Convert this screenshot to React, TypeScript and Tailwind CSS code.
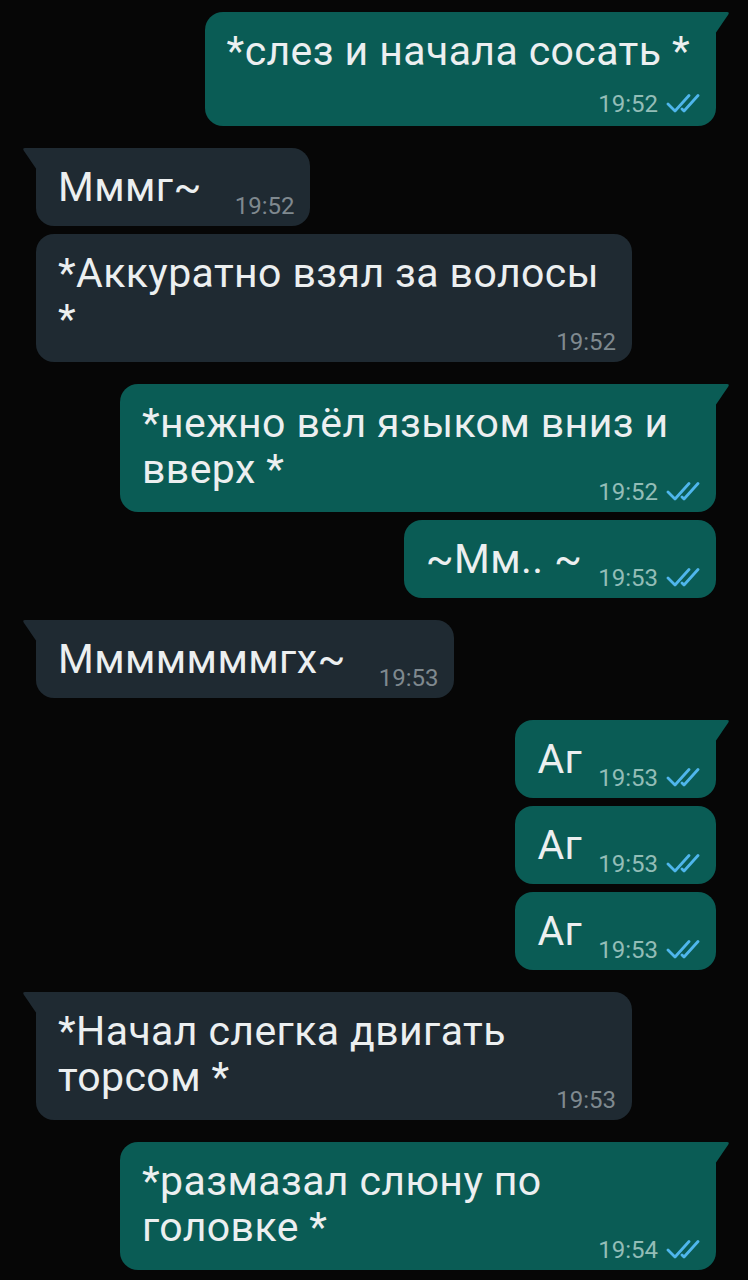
import React from 'react';
import clsx from 'clsx';

type Msg = {
    out: boolean;
    lines: string[];
    time: string;
    tail: boolean;
    mode: 'inline' | 'below' | 'wrap';
};

const messages: Msg[] = [
    { out: true, lines: ['*слез и начала сосать *'], time: '19:52', tail: true, mode: 'below' },
    { out: false, lines: ['Мммг~'], time: '19:52', tail: true, mode: 'inline' },
    { out: false, lines: ['*Аккуратно взял за волосы', '*'], time: '19:52', tail: false, mode: 'wrap' },
    { out: true, lines: ['*нежно вёл языком вниз и', 'вверх *'], time: '19:52', tail: true, mode: 'wrap' },
    { out: true, lines: ['~Мм.. ~'], time: '19:53', tail: false, mode: 'inline' },
    { out: false, lines: ['Мммммммгх~'], time: '19:53', tail: true, mode: 'inline' },
    { out: true, lines: ['Аг'], time: '19:53', tail: true, mode: 'inline' },
    { out: true, lines: ['Аг'], time: '19:53', tail: false, mode: 'inline' },
    { out: true, lines: ['Аг'], time: '19:53', tail: false, mode: 'inline' },
    { out: false, lines: ['*Начал слегка двигать', 'торсом *'], time: '19:53', tail: true, mode: 'wrap' },
    { out: true, lines: ['*размазал слюну по', 'головке *'], time: '19:54', tail: true, mode: 'wrap' },
];

const Checks = () => (
    <svg width="36" height="20" viewBox="0 0 36 20" fill="none" className="ml-[8px]">
        <path d="M2 10 L9 17 L23 1.5" stroke="#4fb6ec" strokeWidth="2.8" strokeLinecap="round" strokeLinejoin="round" />
        <path d="M16 15 L18 17 L32 1.5" stroke="#4fb6ec" strokeWidth="2.8" strokeLinecap="round" strokeLinejoin="round" />
    </svg>
);

const Time: React.FC<{ m: Msg }> = ({ m }) => (
    <div className={clsx('flex items-center shrink-0 text-[24px] leading-[28px]', m.out ? 'text-[#93bdb7]' : 'text-[#7f898f]')}>
        <span>{m.time}</span>
        {m.out && <Checks />}
    </div>
);

const Bubble: React.FC<{ m: Msg; first: boolean }> = ({ m, first }) => {
    const bg = m.out ? 'bg-[#0a5c55]' : 'bg-[#1f2a32]';
    return (
        <div
            className={clsx(
                'flex',
                m.out ? 'justify-end pr-[32px]' : 'justify-start pl-[36px]',
                first ? 'mt-0' : m.tail ? 'mt-[22px]' : 'mt-[8px]'
            )}
        >
            <div
                className={clsx(
                    'relative rounded-[18px] pl-[22px] pt-[16px] text-[#eceff0]',
                    bg,
                    m.out ? 'pr-[14px]' : 'pr-[16px]',
                    m.tail && (m.out ? 'rounded-tr-none' : 'rounded-tl-none'),
                    m.mode === 'below' ? 'pb-[8px] pr-[26px]' : 'pb-[6px]',
                    m.mode === 'wrap' && 'w-[596px]'
                )}
            >
                {m.tail && m.out && (
                    <svg width="15" height="22" viewBox="0 0 15 22" className="absolute top-0 right-[-14px]">
                        <path d="M0 0 H12 Q15 0 13 3 L0 22 Z" fill="#0a5c55" />
                    </svg>
                )}
                {m.tail && !m.out && (
                    <svg width="15" height="22" viewBox="0 0 15 22" className="absolute top-0 left-[-14px]">
                        <path d="M15 0 H3 Q0 0 2 3 L15 22 Z" fill="#1f2a32" />
                    </svg>
                )}

                {m.mode === 'inline' && (
                    <div className="flex items-end">
                        <span className="text-[41px] leading-[46px] tracking-[0.4px] mb-[10px] whitespace-nowrap">{m.lines[0]}</span>
                        <div className={m.out ? 'ml-[16px]' : 'ml-[33px]'}>
                            <Time m={m} />
                        </div>
                    </div>
                )}

                {m.mode === 'below' && (
                    <div className="flex flex-col">
                        <span className="text-[41px] leading-[46px] tracking-[0.4px] whitespace-nowrap">{m.lines[0]}</span>
                        <div className="flex justify-end mt-[16px] -mr-[12px]">
                            <Time m={m} />
                        </div>
                    </div>
                )}

                {m.mode === 'wrap' && (
                    <div className="flex flex-col">
                        {m.lines.map((l, i) => (
                            <span key={i} className="text-[41px] leading-[46px] tracking-[0.4px] whitespace-nowrap">
                                {l}
                            </span>
                        ))}
                        <div className="flex justify-end -mt-[14px]">
                            <Time m={m} />
                        </div>
                    </div>
                )}
            </div>
        </div>
    );
};

const App: React.FC = () => {
    return (
        <div className="w-[748px] h-[1280px] overflow-hidden bg-[#060606] pt-[12px] font-[Roboto,sans-serif]">
            {messages.map((m, i) => (
                <Bubble key={i} m={m} first={i === 0} />
            ))}
        </div>
    );
};

export default App;
